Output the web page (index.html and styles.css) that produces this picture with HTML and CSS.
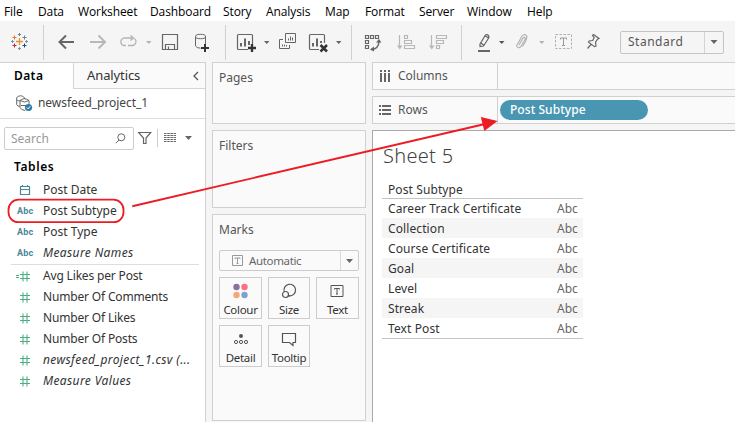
FILE: index.html
```html
<!DOCTYPE html>
<html lang="en">
<head>
<meta charset="utf-8">
<title>Sheet 5</title>
<link rel="stylesheet" href="styles.css">
</head>
<body>
<nav class="menu">
  <span class="m-file">File</span><span class="m-data">Data</span><span class="m-work">Worksheet</span><span class="m-dash">Dashboard</span><span class="m-story">Story</span><span class="m-ana">Analysis</span><span class="m-map">Map</span><span class="m-form">Format</span><span class="m-serv">Server</span><span class="m-win">Window</span><span class="m-help">Help</span>
</nav>
<header class="toolbar">
  <svg width="43" height="24" viewBox="0 30 43 24" fill="none" stroke-width="1">
    <path stroke="#eb912c" stroke-width="1.300" d="M16 41.500h7M19.500 38v7"/>
    <path stroke="#5b879b" d="M22.500 37.500h4M24.500 35.500v4M18 34.500h3M19.500 33v3"/>
    <path stroke="#e8762c" d="M12.500 37.500h4M14.500 35.500v4"/>
    <path stroke="#c72037" d="M12.500 45.500h4M14.500 43.500v4"/>
    <path stroke="#1f457e" d="M22.500 45.500h4M24.500 43.500v4"/>
    <path stroke="#7099a6" d="M11 41.500h3M12.500 40v3M25 41.500h3M26.500 40v3M18 48.500h3M19.500 47v3"/>
  </svg>
  <i class="sep"></i>
  <svg width="181" height="24" viewBox="44 30 181 24" fill="none" stroke="#666">
    <path stroke-width="2" d="M74 42H59.500M66 35.500L59.500 42l6.500 6.500"/>
    <path stroke="#b8b8b8" stroke-width="2" d="M90 42h14.500M98.500 35.500L105 42l-6.500 6.500"/>
    <path stroke="#b4b4b4" stroke-width="1.300" d="M126 45.500h-2.500a4 4 0 0 1 0-7.500H133M130.500 35.500l3 2.500-3 2.500M128 45.500h5a4 4 0 0 0 1.500-7"/>
    <path fill="#b4b4b4" stroke="none" d="M146 41h5.500l-2.750 3z"/>
    <path stroke-width="1.200" d="M162.500 34.500h15v15h-15zM165.500 49.500v-5h9v5M168.500 49v-2.500"/>
    <path d="M195.500 36.500v9.500q1 2 5 2.200M205.500 36.500v7.500"/><ellipse cx="200.500" cy="36.500" rx="5" ry="2.200"/>
    <path stroke="#333" stroke-width="2" d="M201 48h8M205 44v8"/>
  </svg>
  <i class="sep"></i>
  <svg width="125" height="24" viewBox="226 30 125 24" fill="none" stroke="#666">
    <path stroke-width="1.200" d="M248 49.500h-9.500q-1 0-1-1v-13q0-1 1-1h13q1 0 1 1V44"/>
    <path stroke-width="2" d="M241 43v3.500M245 38.500v8M249 41v4"/>
    <path stroke="#333" stroke-width="2.300" d="M248 48h8M252 44v8"/>
    <path fill="#666" stroke="none" d="M264 41h5.500l-2.750 3zM336 41h5.500l-2.750 3z"/>
    <path d="M285.500 33.500h10v9h-10zM283 39.500h-3.500v9h10V45M288.500 38.500v2M290.500 36.500v4M292.500 37.500v3M282.500 44.500v2M284.500 44.500v2M286.500 45v1.500"/>
    <path stroke-width="1.200" d="M319 49.500h-8.500q-1 0-1-1v-13q0-1 1-1h13q1 0 1 1V43"/>
    <path stroke-width="2" d="M313 43v3.500M317 38.500v8M321 41v2"/>
    <path stroke="#333" stroke-width="2.500" d="M320.500 45l6.500 6.500M327 45l-6.500 6.500"/>
  </svg>
  <i class="sep"></i>
  <svg width="109" height="24" viewBox="352 30 109 24" fill="none" stroke="#666">
    <path stroke-width="1.200" d="M365.500 35.500h3v3h-3zM370.500 35.500h3v3h-3zM375.500 35.500h3v3h-3zM365.500 40.500h3v3h-3zM365.500 45.500h3v3h-3z"/>
    <path stroke-width="1.500" d="M371.500 49.500q7-.500 7.500-8"/><path fill="#666" stroke="none" d="M370 49.500l4-3v5zM379 39l-3 3.500h5.500z"/>
    <g stroke="#b8b8b8"><path stroke-width="1.200" d="M399.500 35v13M404.500 35.500h3v3h-3zM404.500 40.500h7v3h-7zM404.500 45.500h10v3h-10zM431.500 35v13M436.500 35.500h10v3h-10zM436.500 40.500h7v3h-7zM436.500 45.500h3v3h-3z"/><path fill="#b8b8b8" stroke="none" d="M397 45.500h5.500l-2.750 4zM429 45.500h5.500l-2.750 4z"/></g>
  </svg>
  <i class="sep"></i>
  <svg width="158" height="24" viewBox="462 30 158 24" fill="none" stroke="#666">
    <path stroke-width="1.200" d="M480 44l5.500-9q1.500-1 3 .500l.500 2-5.500 8.500-3.500.500zM485.500 36l3 2M481 43l2.500 2"/><path stroke-width="2" d="M478 51h12"/>
    <path fill="#555" stroke="none" d="M499 41h5.500l-2.750 3z"/>
    <path stroke="#b4b4b4" stroke-width="1.200" d="M519 45l4-7q2-1.500 2.500.500l-4.500 8q-2.500 2.500-4.500-.500l5.500-10q3-3 5 .500l-1 4-3.500 6"/>
    <path fill="#b4b4b4" stroke="none" d="M539 41h5.500l-2.750 3z"/>
    <path stroke="#b0b0b0" stroke-dasharray="2.500 1.500" d="M555.500 34.500h16v14h-16z"/>
    <path stroke="#999" d="M560.500 39.500v-1.500h6v1.500M563.500 38v7.500M562 45.500h3"/>
    <path stroke-width="1.200" d="M592.500 35.500l1-1 5.500 4-1.500.700-2 3 .500 4-1.500.500-6-4.500 .700-1.200 3.500-.500 1.500-3zM591 44.500l-3.500 4"/>
  </svg>
  <div class="fit"><span>Standard</span><b><svg width="8" height="4" viewBox="0 0 8 4"><path fill="#666" d="M.500 0h7L4 4z"/></svg></b></div>
</header>
<main>
  <aside>
    <div class="tabs"><div class="tab on">Data</div><div class="tab off"><span>Analytics</span>
      <svg width="8" height="10" viewBox="0 0 8 10"><path fill="none" stroke="#555" stroke-width="1.300" d="M7 1L3 5l4 4"/></svg></div></div>
    <div class="source">
      <svg width="17" height="17" viewBox="0 0 17 17" fill="none" stroke="#666"><path d="M.700 2.500q4-3.500 7.500 0M.700 2.500v7q1 2 3 2M4 5.500v7q1 2.500 5 3M4 5.500q4.500-3.500 9 0v4M4 5.500q4.500 3 9 0M8.500 2.500V4M1 5q1 1 3 1M5 10.500h5"/><circle cx="12.500" cy="12.500" r="3.600" fill="#2e7da5" stroke="none"/><path stroke="#fff" d="M10.800 12.500l1.300 1.400 2.300-2.700"/></svg>
      <span>newsfeed_project_1</span>
    </div>
    <div class="find">
      <div class="search"><span>Search</span><svg width="11" height="11" viewBox="0 0 11 11" fill="none" stroke="#666"><circle cx="6.300" cy="4.300" r="3.500"/><path d="M4 7L.800 10.200"/></svg></div>
      <svg width="60" height="22" viewBox="134 127 60 22" fill="none" stroke="#666"><path stroke-width="1.200" d="M138.700 132.500h12l-4.700 5.500v5.500h-2.500V138z"/><path stroke="#ccc" d="M157.500 129v18"/><path stroke-width="1.200" stroke-dasharray="2.500 .700" d="M164 133.500h12M164 135.500h12M164 137.500h12M164 139.500h12M164 141.500h12"/><path fill="#666" stroke="none" d="M185 136h7l-3.500 4z"/></svg>
    </div>
    <h2>Tables</h2>
    <ul class="fields dims">
      <li><svg width="28" height="14" viewBox="11 183 28 14"><path fill="none" stroke="#4a8799" stroke-width="1.200" d="M20.500 186.500h9v8h-9zM20.500 189.500h9M22.500 185v2M27.500 185v2"/></svg>Post Date</li>
      <li><b>Abc</b><span class="sub">Post Subtype</span></li>
      <li><b>Abc</b>Post Type</li>
      <li class="it"><b>Abc</b>Measure Names</li>
    </ul>
    <ul class="fields meas">
      <li><svg width="28" height="14" viewBox="11 0 28 14"><path class="hash" d="M20 5.500h10M20 9.500h10M23 2.500v10M27 2.500v10M16 6.500h3M16 8.500h3"/></svg>Avg Likes per Post</li>
      <li><svg width="28" height="14" viewBox="11 0 28 14"><path class="hash" d="M20 5.500h10M20 9.500h10M23 2.500v10M27 2.500v10"/></svg>Number Of Comments</li>
      <li><svg width="28" height="14" viewBox="11 0 28 14"><path class="hash" d="M20 5.500h10M20 9.500h10M23 2.500v10M27 2.500v10"/></svg>Number Of Likes</li>
      <li><svg width="28" height="14" viewBox="11 0 28 14"><path class="hash" d="M20 5.500h10M20 9.500h10M23 2.500v10M27 2.500v10"/></svg>Number Of Posts</li>
      <li class="it"><svg width="28" height="14" viewBox="11 0 28 14"><path class="hash" d="M20 5.500h10M20 9.500h10M23 2.500v10M27 2.500v10"/></svg>newsfeed_project_1.csv (...</li>
      <li class="it"><svg width="28" height="14" viewBox="11 0 28 14"><path class="hash" d="M20 5.500h10M20 9.500h10M23 2.500v10M27 2.500v10"/></svg>Measure Values</li>
    </ul>
  </aside>
  <section class="cards">
    <div class="card pages">Pages</div>
    <div class="card filters">Filters</div>
    <div class="card marks">Marks
      <div class="type"><svg width="11" height="11" viewBox="0 0 11 11" fill="none" stroke="#999"><path d="M.500.500h10v10H.500zM3 4V3h5v1M5.500 3v5.500M4.500 8.500h2"/></svg><span>Automatic</span><b><svg width="7" height="4" viewBox="0 0 7 4"><path fill="#666" d="M0 0h7L3.500 4z"/></svg></b></div>
      <div class="tiles">
        <div class="tile"><svg width="16" height="16" viewBox="0 0 16 16"><circle cx="3.500" cy="4" r="3.200" fill="#8a739b"/><circle cx="11.500" cy="4" r="3.200" fill="#ff6f80"/><circle cx="3.500" cy="12" r="3.200" fill="#f7a877"/><circle cx="11.500" cy="12" r="3.200" fill="#7fa3ce"/></svg>Colour</div>
        <div class="tile"><svg width="16" height="16" viewBox="0 0 16 16" fill="none" stroke="#555" stroke-width="1.200"><path d="M3.300 9A5.800 5.800 0 1 1 8 12.800"/><circle cx="4.500" cy="11.500" r="3"/><path d="M7 12.800h2"/></svg>Size</div>
        <div class="tile"><svg width="16" height="16" viewBox="0 0 16 16" fill="none" stroke="#555"><path d="M1 2.500h12v11H1z"/><path d="M4.500 6.500v-1h5v1M7 5.500v5.500M6 11h2"/></svg>Text</div>
        <div class="tile"><svg width="16" height="16" viewBox="0 0 16 16" fill="none" stroke="#555"><circle cx="8" cy="5" r="2" fill="#555" stroke="none"/><circle cx="3" cy="11" r="1.600"/><circle cx="8" cy="11" r="1.600"/><circle cx="13" cy="11" r="1.600"/></svg>Detail</div>
        <div class="tile"><svg width="16" height="16" viewBox="0 0 16 16" fill="none" stroke="#555" stroke-width="1.200"><path d="M1.500 2.500h13v9h-2.500v3l-3.500-3h-7z"/></svg>Tooltip</div>
      </div>
    </div>
  </section>
  <section class="view">
    <div class="shelf"><div class="label"><svg width="12" height="12" viewBox="0 0 12 12" fill="#666"><path d="M1 0h2v2H1zM5 0h2v2H5zM9 0h2v2H9zM1 3h2v9H1zM5 3h2v9H5zM9 3h2v9H9z"/></svg>Columns</div></div>
    <div class="shelf"><div class="label"><svg width="12" height="12" viewBox="0 0 12 12" fill="#666"><path d="M0 1h2v2H0zM0 5h2v2H0zM0 9h2v2H0zM3 1h9v2H3zM3 5h9v2H3zM3 9h9v2H3z"/></svg>Rows</div><div class="pill">Post Subtype</div></div>
    <div class="sheet">
      <h1>Sheet 5</h1>
      <table>
        <thead><tr><th colspan="2">Post Subtype</th></tr></thead>
        <tbody>
          <tr><td>Career Track Certificate</td><td>Abc</td></tr>
          <tr><td>Collection</td><td>Abc</td></tr>
          <tr><td>Course Certificate</td><td>Abc</td></tr>
          <tr><td>Goal</td><td>Abc</td></tr>
          <tr><td>Level</td><td>Abc</td></tr>
          <tr><td>Streak</td><td>Abc</td></tr>
          <tr><td>Text Post</td><td>Abc</td></tr>
        </tbody>
      </table>
    </div>
  </section>
</main>
<svg class="note" width="735" height="422" viewBox="0 0 735 422"><rect x="8.500" y="199.700" width="115" height="22.500" rx="10" fill="none" stroke="#ed1c24" stroke-width="1.800"/><path stroke="#ed1c24" stroke-width="1.900" d="M132.300 206.200L485 124"/><path fill="#ed1c24" d="M497.500 121L480.800 117l3.500 14z"/></svg>
</body>
</html>
```
FILE: styles.css
```css
* { box-sizing: border-box; }
body { margin: 0; width: 735px; height: 422px; overflow: hidden; background: #f5f5f5; color: #333; font: 12px/16px "Noto Sans", sans-serif; }
svg { display: block; flex: none; }
h1, h2, ul { margin: 0; padding: 0; font-weight: normal; }
.menu { display: flex; height: 21px; padding-left: 4px; background: #fff; color: #000; font: 12px/24px "Open Sans", sans-serif; letter-spacing: -0.1px; }
.menu span { flex: none; white-space: nowrap; }
.m-file { width: 34px; }
.m-data { width: 40px; }
.m-work { width: 72px; }
.m-dash { width: 73px; }
.m-story { width: 43px; }
.m-ana { width: 59px; }
.m-map { width: 40px; }
.m-form { width: 54px; }
.m-serv { width: 48px; }
.m-win { width: 60px; }
.toolbar { display: flex; align-items: center; height: 41px; padding-top: 1px; }
.sep { width: 1px; height: 35px; background: #d0d0d0; }
.fit { display: flex; width: 104px; height: 23px; border: 1px solid #c4c4c4; border-radius: 2px; line-height: 20px; color: #555; letter-spacing: .5px; }
.fit span { flex: 1; padding-left: 7px; }
.fit b { width: 19px; border-left: 1px solid #d4d4d4; display: grid; place-items: center; }
main { display: flex; height: 360px; }
aside { width: 206px; background: #fff; border: 1px solid #d0d0d0; border-width: 1px 1px 0 0; }
.tabs { display: flex; height: 26px; font-size: 13px; line-height: 25px; }
.on { width: 73px; padding-left: 14px; color: #000; font-weight: 600; font-size: 12px; letter-spacing: .4px; }
.off { flex: 1; display: flex; align-items: center; justify-content: space-between; padding: 0 6px 0 13px; background: #fafafa; border: 1px solid #d4d4d4; border-width: 0 0 1px 1px; letter-spacing: -.1px; }
.source { display: flex; align-items: center; gap: 5px; height: 30px; padding-left: 16px; border-bottom: 1px solid #ddd; color: #444; letter-spacing: -.05px; line-height: 14px; }
.source span { padding-bottom: 2px; }
.find { display: flex; padding: 8px 0 0 4px; }
.search { display: flex; align-items: center; justify-content: space-between; width: 130px; height: 23px; padding: 0 7px 0 6px; border: 1px solid #ccc; border-radius: 2px; color: #999; }
h2 { margin-top: 9px; padding-left: 14px; color: #000; font-size: 12px; font-weight: 600; line-height: 16px; letter-spacing: .6px; }
.fields { list-style: none; }
.fields li { display: flex; align-items: center; height: 21px; padding-left: 15px; white-space: nowrap; }
.fields b { width: 28px; padding-left: 2px; color: #4a8799; font: bold 9px/16px Roboto, sans-serif; letter-spacing: .2px; }
.dims { margin: 4px 6px 0 0; height: 85px; }
.dims::after { content: ""; display: block; height: 1px; margin: 1px 0 0 11px; background: #ddd; }
.meas { margin-top: 1px; letter-spacing: -.17px; }
.fields .it { font-style: italic; letter-spacing: .38px; }
.hash { fill: none; stroke: #4caf83; stroke-width: 1.1; }
.fields svg { margin-left: -4px; margin-right: 4px; }
.cards { width: 154px; margin-left: 6px; }
.card { padding: 7px 6px; border: 1px solid #d0d0d0; background: #fafafa; color: #555; }
.pages { height: 62px; }
.filters { height: 78px; margin: 6px 0; }
.marks { height: 207px; }
.type { display: flex; align-items: center; width: 140px; height: 21px; margin-top: 12px; padding-left: 12px; border: 1px solid #ccc; border-radius: 2px; color: #666; line-height: 19px; }
.type span { flex: 1; padding-left: 6px; font-size: 11.5px; letter-spacing: -.35px; }
.type b { width: 18px; height: 19px; border-left: 1px solid #d8d8d8; display: grid; place-items: center; }
.tiles { display: grid; grid-template-columns: 43px 42px 43px; gap: 6px; margin-top: 6px; }
.tile { display: flex; flex-direction: column; align-items: center; height: 42px; padding-top: 5px; border: 1px solid #ccc; color: #333; font-size: 11.5px; letter-spacing: -.3px; line-height: 22px; }
.view { flex: 1; margin-left: 6px; }
.shelf { display: flex; height: 28px; margin-bottom: 6px; border: 1px solid #d0d0d0; border-right: 0; background: #fafafa; }
.label { display: flex; align-items: center; gap: 7px; width: 125px; padding-left: 6px; border-right: 1px solid #d0d0d0; color: #555; }
.pill { width: 148px; height: 20px; margin: 3px 0 0 2px; padding-left: 10px; border-radius: 10px; background: #4996b2; color: #fff; font-weight: 500; line-height: 20px; letter-spacing: .05px; }
.sheet { height: 292px; padding: 13px 0 0 9px; border: 1px solid #aaa; border-width: 1px 0 0 1px; background: #fff; }
h1 { padding-left: 1px; color: #444; font-size: 20px; font-weight: 300; line-height: 24px; letter-spacing: .3px; }
table { width: 201px; margin-top: 14px; border-spacing: 0; border-bottom: 1px solid #c4c4c4; line-height: 18px; letter-spacing: .1px; }
th { height: 17px; padding: 0 6px; border-bottom: 1px solid #c4c4c4; font-weight: normal; text-align: left; line-height: 16px; }
td { height: 20px; padding: 1px 0 0 6px; }
tr:first-child td { height: 19px; }
td:last-child { width: 26px; padding: 1px 0 0; color: #666; letter-spacing: 0; }
tbody tr:nth-child(even) { background: #f5f5f5; }
.note { position: absolute; left: 0; top: 0; pointer-events: none; }
```
